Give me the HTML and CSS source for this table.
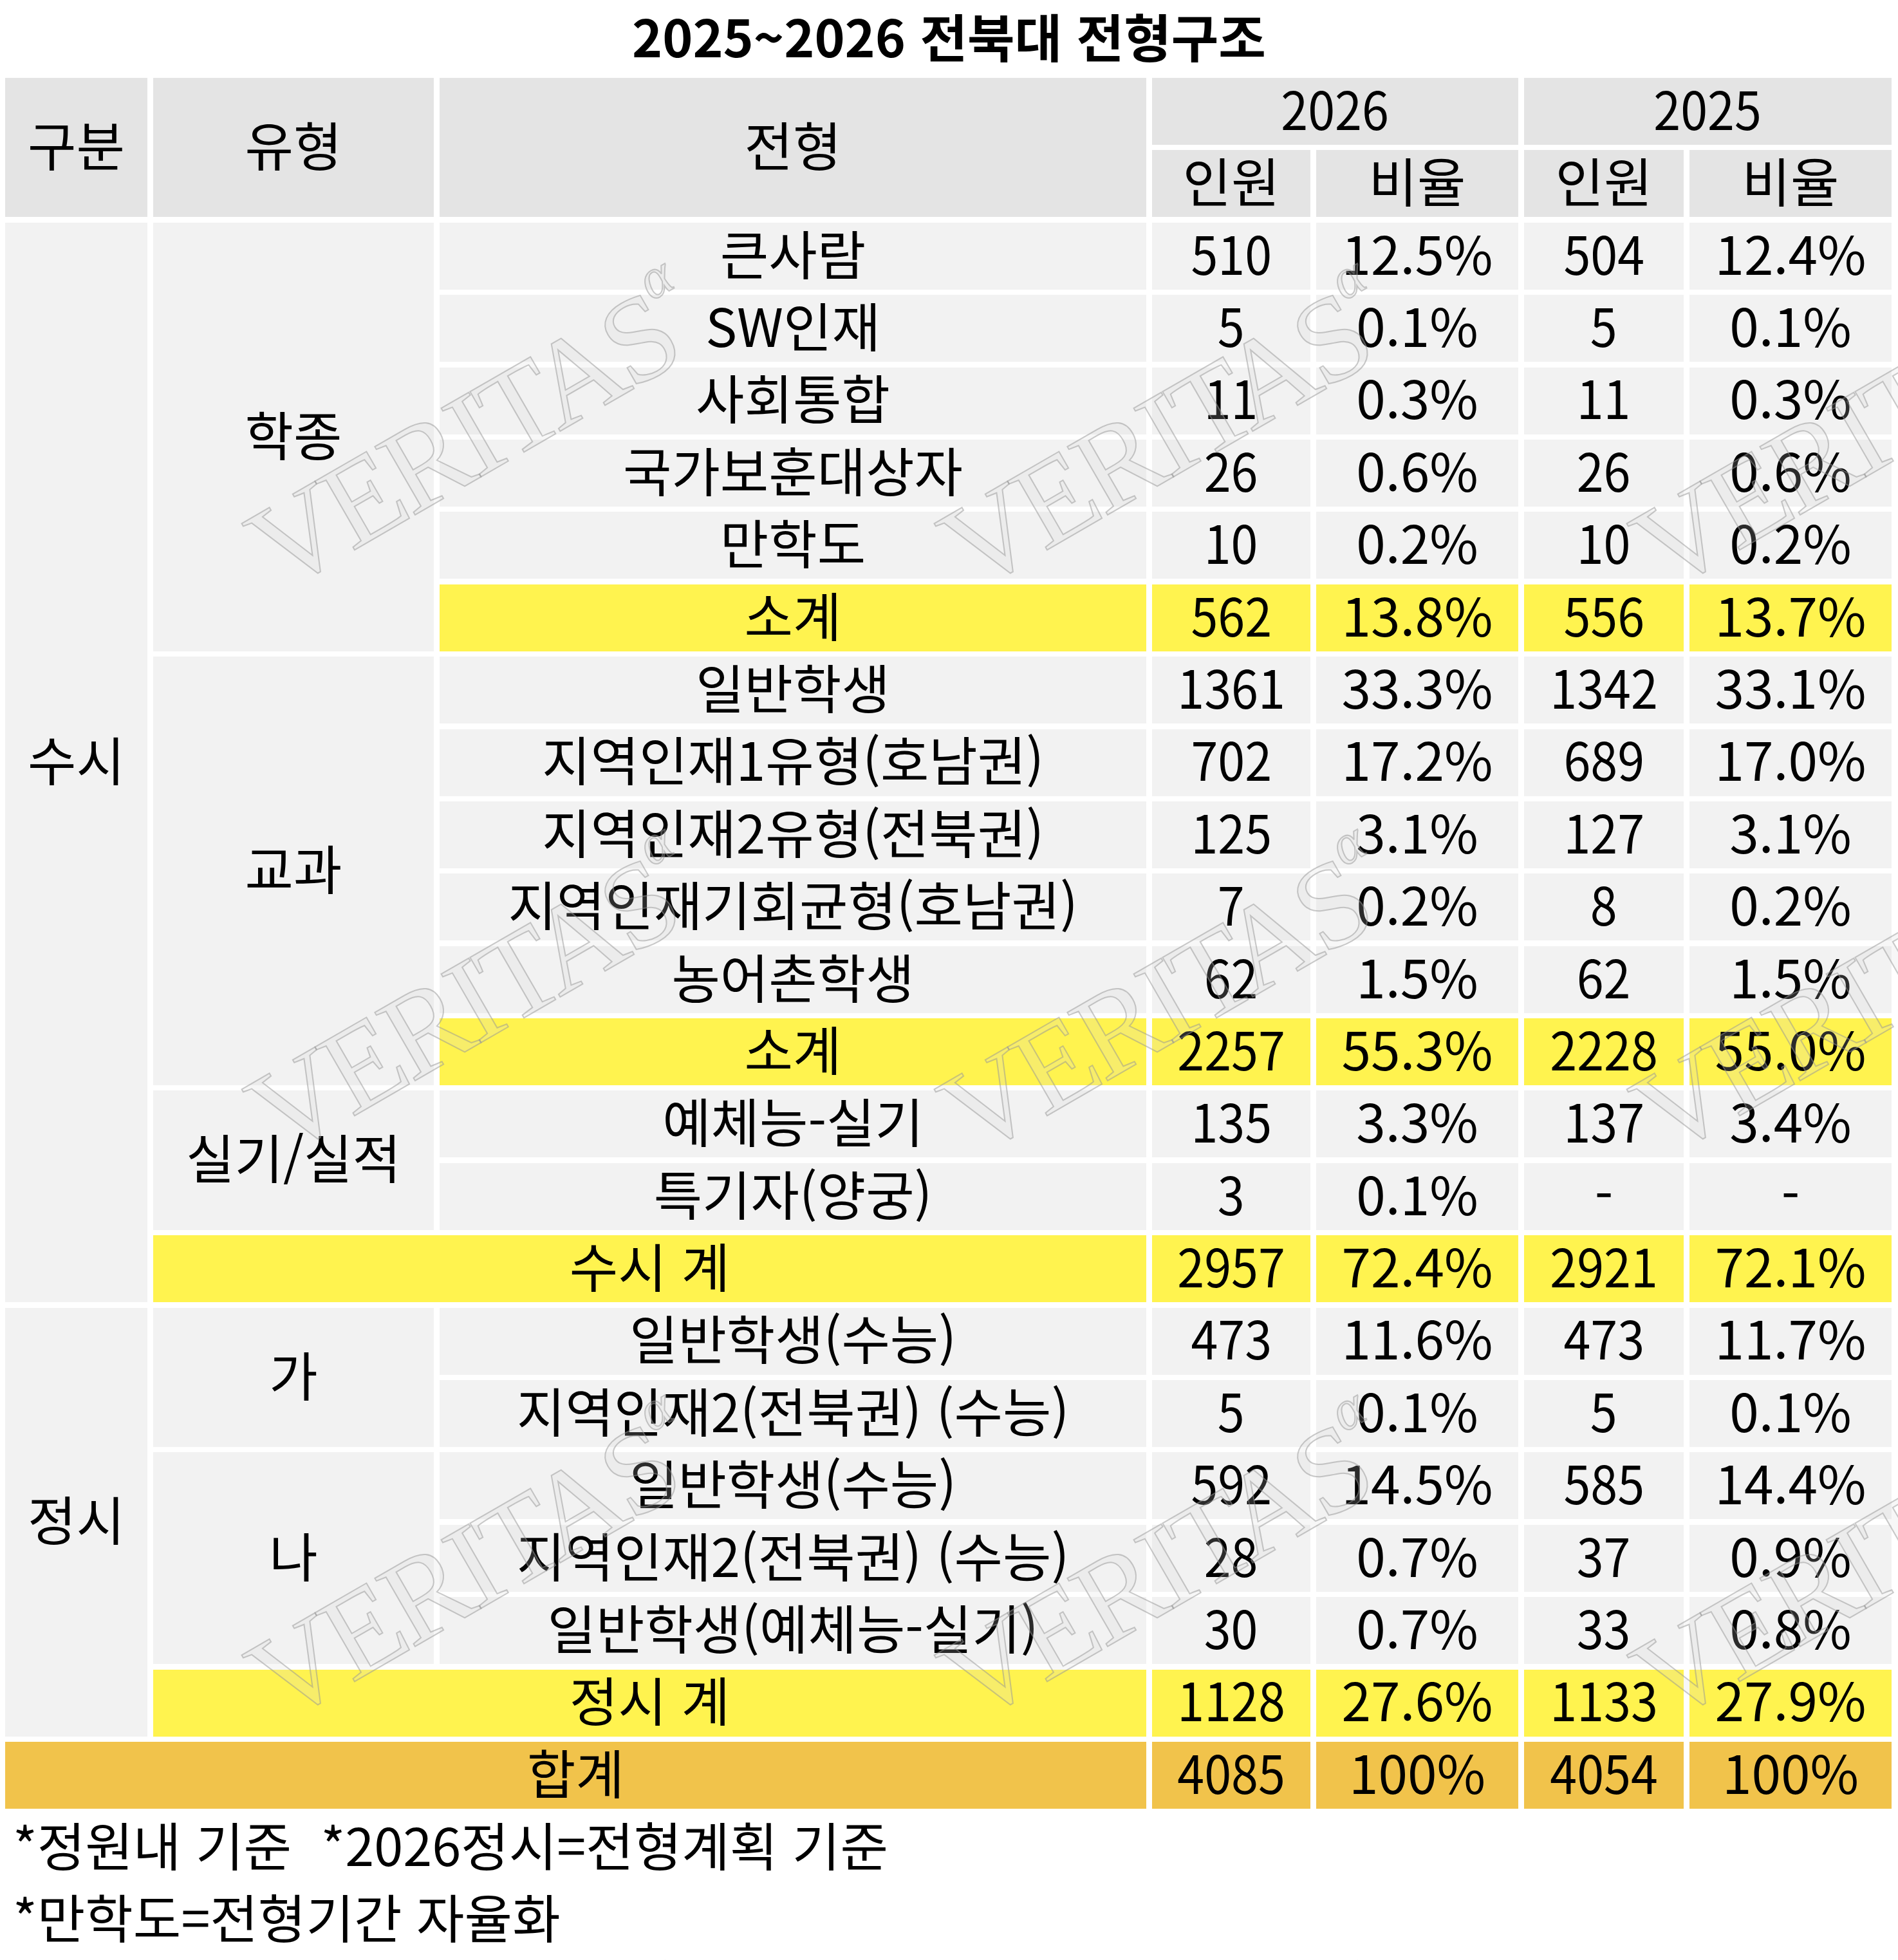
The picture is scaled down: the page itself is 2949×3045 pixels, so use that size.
FILE: index.html
```html
<!DOCTYPE html>
<html lang="ko">
<head>
<meta charset="utf-8">
<title>2025~2026 전북대 전형구조</title>
<link rel="stylesheet" href="styles.css">
</head>
<body>
<div class="page">
  <h1 class="title">2025~2026 전북대 전형구조</h1>

  <div class="grid">
    <div class="c h rs2"><span class="t">구분</span></div>
    <div class="c h rs2"><span class="t">유형</span></div>
    <div class="c h rs2"><span class="t">전형</span></div>
    <div class="c h cs2"><span class="t n">2026</span></div>
    <div class="c h cs2"><span class="t n">2025</span></div>
    <div class="c h"><span class="t">인원</span></div>
    <div class="c h"><span class="t">비율</span></div>
    <div class="c h"><span class="t">인원</span></div>
    <div class="c h"><span class="t">비율</span></div>

    <div class="c rs15"><span class="t">수시</span></div>
    <div class="c rs6"><span class="t">학종</span></div>
    <div class="c"><span class="t">큰사람</span></div><div class="c"><span class="t n">510</span></div><div class="c"><span class="t">12.5%</span></div><div class="c"><span class="t n">504</span></div><div class="c"><span class="t">12.4%</span></div>
    <div class="c"><span class="t">SW인재</span></div><div class="c"><span class="t n">5</span></div><div class="c"><span class="t">0.1%</span></div><div class="c"><span class="t n">5</span></div><div class="c"><span class="t">0.1%</span></div>
    <div class="c"><span class="t">사회통합</span></div><div class="c"><span class="t n">11</span></div><div class="c"><span class="t">0.3%</span></div><div class="c"><span class="t n">11</span></div><div class="c"><span class="t">0.3%</span></div>
    <div class="c"><span class="t">국가보훈대상자</span></div><div class="c"><span class="t n">26</span></div><div class="c"><span class="t">0.6%</span></div><div class="c"><span class="t n">26</span></div><div class="c"><span class="t">0.6%</span></div>
    <div class="c"><span class="t">만학도</span></div><div class="c"><span class="t n">10</span></div><div class="c"><span class="t">0.2%</span></div><div class="c"><span class="t n">10</span></div><div class="c"><span class="t">0.2%</span></div>
    <div class="c y"><span class="t">소계</span></div><div class="c y"><span class="t n">562</span></div><div class="c y"><span class="t">13.8%</span></div><div class="c y"><span class="t n">556</span></div><div class="c y"><span class="t">13.7%</span></div>

    <div class="c rs6"><span class="t">교과</span></div>
    <div class="c"><span class="t">일반학생</span></div><div class="c"><span class="t n">1361</span></div><div class="c"><span class="t">33.3%</span></div><div class="c"><span class="t n">1342</span></div><div class="c"><span class="t">33.1%</span></div>
    <div class="c"><span class="t">지역인재1유형(호남권)</span></div><div class="c"><span class="t n">702</span></div><div class="c"><span class="t">17.2%</span></div><div class="c"><span class="t n">689</span></div><div class="c"><span class="t">17.0%</span></div>
    <div class="c"><span class="t">지역인재2유형(전북권)</span></div><div class="c"><span class="t n">125</span></div><div class="c"><span class="t">3.1%</span></div><div class="c"><span class="t n">127</span></div><div class="c"><span class="t">3.1%</span></div>
    <div class="c"><span class="t">지역인재기회균형(호남권)</span></div><div class="c"><span class="t n">7</span></div><div class="c"><span class="t">0.2%</span></div><div class="c"><span class="t n">8</span></div><div class="c"><span class="t">0.2%</span></div>
    <div class="c"><span class="t">농어촌학생</span></div><div class="c"><span class="t n">62</span></div><div class="c"><span class="t">1.5%</span></div><div class="c"><span class="t n">62</span></div><div class="c"><span class="t">1.5%</span></div>
    <div class="c y"><span class="t">소계</span></div><div class="c y"><span class="t n">2257</span></div><div class="c y"><span class="t">55.3%</span></div><div class="c y"><span class="t n">2228</span></div><div class="c y"><span class="t">55.0%</span></div>

    <div class="c rs2"><span class="t">실기/실적</span></div>
    <div class="c"><span class="t">예체능-실기</span></div><div class="c"><span class="t n">135</span></div><div class="c"><span class="t">3.3%</span></div><div class="c"><span class="t n">137</span></div><div class="c"><span class="t">3.4%</span></div>
    <div class="c"><span class="t">특기자(양궁)</span></div><div class="c"><span class="t n">3</span></div><div class="c"><span class="t">0.1%</span></div><div class="c"><span class="t">-</span></div><div class="c"><span class="t">-</span></div>

    <div class="c y cs2"><span class="t">수시 계</span></div><div class="c y"><span class="t n">2957</span></div><div class="c y"><span class="t">72.4%</span></div><div class="c y"><span class="t n">2921</span></div><div class="c y"><span class="t">72.1%</span></div>

    <div class="c rs6"><span class="t">정시</span></div>
    <div class="c rs2"><span class="t">가</span></div>
    <div class="c"><span class="t">일반학생(수능)</span></div><div class="c"><span class="t n">473</span></div><div class="c"><span class="t">11.6%</span></div><div class="c"><span class="t n">473</span></div><div class="c"><span class="t">11.7%</span></div>
    <div class="c"><span class="t">지역인재2(전북권) (수능)</span></div><div class="c"><span class="t n">5</span></div><div class="c"><span class="t">0.1%</span></div><div class="c"><span class="t n">5</span></div><div class="c"><span class="t">0.1%</span></div>
    <div class="c rs3"><span class="t">나</span></div>
    <div class="c"><span class="t">일반학생(수능)</span></div><div class="c"><span class="t n">592</span></div><div class="c"><span class="t">14.5%</span></div><div class="c"><span class="t n">585</span></div><div class="c"><span class="t">14.4%</span></div>
    <div class="c"><span class="t">지역인재2(전북권) (수능)</span></div><div class="c"><span class="t n">28</span></div><div class="c"><span class="t">0.7%</span></div><div class="c"><span class="t n">37</span></div><div class="c"><span class="t">0.9%</span></div>
    <div class="c"><span class="t">일반학생(예체능-실기)</span></div><div class="c"><span class="t n">30</span></div><div class="c"><span class="t">0.7%</span></div><div class="c"><span class="t n">33</span></div><div class="c"><span class="t">0.8%</span></div>
    <div class="c y cs2"><span class="t">정시 계</span></div><div class="c y"><span class="t n">1128</span></div><div class="c y"><span class="t">27.6%</span></div><div class="c y"><span class="t n">1133</span></div><div class="c y"><span class="t">27.9%</span></div>

    <div class="c o cs3"><span class="t">합계</span></div><div class="c o"><span class="t n">4085</span></div><div class="c o"><span class="t">100%</span></div><div class="c o"><span class="t n">4054</span></div><div class="c o"><span class="t">100%</span></div>
  </div>

  <div class="notes">
    <p class="note">*정원내 기준 &nbsp;*2026정시=전형계획 기준</p>
    <p class="note">*만학도=전형기간 자율화</p>
  </div>

  <div class="wm-layer" aria-hidden="true">
    <div class="wm-cell"><span class="wm">VERITAS<i class="wm-a">α</i></span></div>
    <div class="wm-cell"><span class="wm">VERITAS<i class="wm-a">α</i></span></div>
    <div class="wm-cell"><span class="wm">VERITAS<i class="wm-a">α</i></span></div>
    <div class="wm-cell"><span class="wm">VERITAS<i class="wm-a">α</i></span></div>
    <div class="wm-cell"><span class="wm">VERITAS<i class="wm-a">α</i></span></div>
    <div class="wm-cell"><span class="wm">VERITAS<i class="wm-a">α</i></span></div>
    <div class="wm-cell"><span class="wm">VERITAS<i class="wm-a">α</i></span></div>
    <div class="wm-cell"><span class="wm">VERITAS<i class="wm-a">α</i></span></div>
    <div class="wm-cell"><span class="wm">VERITAS<i class="wm-a">α</i></span></div>
    <div class="wm-cell"><span class="wm">VERITAS<i class="wm-a">α</i></span></div>
    <div class="wm-cell"><span class="wm">VERITAS<i class="wm-a">α</i></span></div>
    <div class="wm-cell"><span class="wm">VERITAS<i class="wm-a">α</i></span></div>
  </div>
</div>
</body>
</html>
```
FILE: styles.css
```css
html, body {
  margin: 0;
  padding: 0;
  overflow: hidden;
  background: #ffffff;
}

body {
  font-family: "Noto Sans CJK KR", "Noto Sans", sans-serif;
  color: #000000;
}

.page {
  position: relative;
  width: 2949px;
  height: 3045px;
  padding: 0 8px;
  box-sizing: border-box;
  overflow: hidden;
}

.title {
  margin: 0;
  height: 121px;
  box-sizing: border-box;
  padding-bottom: 13px;
  display: flex;
  align-items: center;
  justify-content: center;
  font-size: 80px;
  font-weight: 700;
  line-height: 1.2;
  white-space: nowrap;
}

.t {
  display: inline-block;
  white-space: nowrap;
}

.n {
  transform: scaleX(0.92);
}

.grid {
  display: grid;
  grid-template-columns: 221px 436px 1098px 246px 314px 248px 314px;
  column-gap: 9px;
  row-gap: 8.4px;
  grid-auto-rows: 104px;
}

.c {
  display: flex;
  align-items: center;
  justify-content: center;
  box-sizing: border-box;
  padding-bottom: 12px;
  background: #f2f2f2;
  font-size: 82px;
  line-height: 1.2;
}

.h { background: #e4e4e4; }
.y { background: #fff34f; }
.o { background: #f1c34b; }

.rs2 { grid-row: span 2; }
.rs3 { grid-row: span 3; }
.rs6 { grid-row: span 6; }
.rs15 { grid-row: span 15; }
.cs2 { grid-column: span 2; }
.cs3 { grid-column: span 3; }

.notes {
  padding-top: 2px;
}

.note {
  margin: 0;
  height: 112px;
  display: flex;
  align-items: center;
  padding-left: 12px;
  padding-bottom: 8px;
  box-sizing: border-box;
  font-size: 81px;
  line-height: 1.2;
  white-space: nowrap;
}

/* watermark overlay */
.wm-layer {
  position: absolute;
  left: 180px;
  top: 245px;
  display: grid;
  grid-template-columns: repeat(3, 1076px);
  grid-template-rows: repeat(4, 879px);
  pointer-events: none;
}

.wm-cell {
  display: flex;
  align-items: center;
  justify-content: center;
}

.wm {
  position: relative;
  display: inline-block;
  font-family: "Liberation Serif", "DejaVu Serif", serif;
  font-size: 188px;
  line-height: 1;
  letter-spacing: -0.04em;
  white-space: nowrap;
  color: rgba(215, 215, 215, 0.2);
  -webkit-text-stroke: 2px rgba(150, 150, 150, 0.5);
  transform: rotate(-30deg);
}

.wm-a {
  position: absolute;
  left: 100%;
  top: -20px;
  font-size: 88px;
  font-style: italic;
  letter-spacing: 0;
}
```
